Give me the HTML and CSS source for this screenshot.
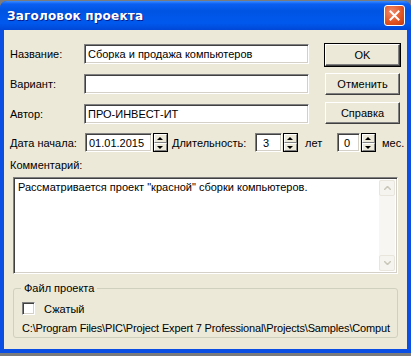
FILE: index.html
```html
<!DOCTYPE html>
<html>
<head>
  <title>Заголовок проекта</title>
  <link rel="stylesheet" href="styles.css">
</head>
<body>
  <div class="window">
    <div class="titlebar">
      <span class="title">Заголовок проекта</span>
      <button class="close" aria-label="Закрыть">
        <svg width="11" height="11" viewBox="0 0 11 11"><path d="M1.5 1.5 L9.5 9.5 M9.5 1.5 L1.5 9.5" stroke="#fff" stroke-width="2" stroke-linecap="square"/></svg>
      </button>
    </div>
    <div class="client">
      <div class="top">
        <div class="fields">
          <div class="row">
            <label class="lbl">Название:</label>
            <div class="edit wide">Сборка и продажа компьютеров</div>
          </div>
          <div class="row">
            <label class="lbl">Вариант:</label>
            <div class="edit wide"></div>
          </div>
          <div class="row">
            <label class="lbl">Автор:</label>
            <div class="edit wide">ПРО-ИНВЕСТ-ИТ</div>
          </div>
        </div>
        <div class="buttons">
          <button class="btn default">OK</button>
          <button class="btn">Отменить</button>
          <button class="btn">Справка</button>
        </div>
      </div>
      <div class="row dates">
        <label class="lbl-date">Дата начала:</label>
        <div class="edit date">01.01.2015</div>
        <div class="spin"><span class="up"></span><span class="down"></span></div>
        <label class="lbl-dur">Длительность:</label>
        <div class="edit num">3</div>
        <div class="spin"><span class="up"></span><span class="down"></span></div>
        <span class="unit">лет</span>
        <div class="edit num small">0</div>
        <div class="spin"><span class="up"></span><span class="down"></span></div>
        <span class="unit last">мес.</span>
      </div>
      <div class="comment-label">Комментарий:</div>
      <div class="memo">
        <div class="memo-text">Рассматривается проект "красной" сборки компьютеров.</div>
        <div class="scroll">
          <div class="sbtn"><svg width="7" height="4" viewBox="0 0 7 4"><path d="M0 4 L3.5 0.5 L7 4" fill="none" stroke="#c9c7ba" stroke-width="1.5"/></svg></div>
          <div class="track"></div>
          <div class="sbtn"><svg width="7" height="4" viewBox="0 0 7 4"><path d="M0 0 L3.5 3.5 L7 0" fill="none" stroke="#c9c7ba" stroke-width="1.5"/></svg></div>
        </div>
      </div>
      <fieldset class="group">
        <legend>Файл проекта</legend>
        <div class="check-row">
          <span class="check"></span>
          <span>Сжатый</span>
        </div>
        <div class="path">C:\Program Files\PIC\Project Expert 7 Professional\Projects\Samples\Comput</div>
      </fieldset>
    </div>
  </div>
</body>
</html>
```

FILE: styles.css
```css
body {
  margin: 0;
  padding: 0;
  background: #7b7b7b;
  font-family: "Liberation Sans", Arial, sans-serif;
  font-size: 11px;
  color: #000;
}
.window {
  width: 411px;
  height: 352px;
  margin-top: 1px;
  box-sizing: border-box;
  background: #0a4ee4;
  border-radius: 7px 7px 0 0;
  padding: 0 4px 4px 4px;
  display: flex;
  flex-direction: column;
}
.titlebar {
  height: 29px;
  display: flex;
  align-items: center;
  justify-content: space-between;
  background: linear-gradient(#3a8cff 0, #0a5ff2 3px, #0054e3 10px, #0059ee 22px, #0047d6 29px);
  margin: 0 -4px;
  padding-left: 7px;
  padding-right: 6px;
  border-radius: 7px 7px 0 0;
}
.title {
  color: #fff;
  font-family: "DejaVu Sans", sans-serif;
  font-weight: bold;
  font-size: 12px;
  letter-spacing: 0.2px;
  text-shadow: 1px 1px #0a1d8c;
  padding-top: 1px;
}
.close {
  width: 21px;
  height: 21px;
  padding: 0;
  border: 1px solid #fff;
  border-radius: 3px;
  background: radial-gradient(circle at 35% 30%, #f08a6a, #e0521f 60%, #c23a12);
  display: flex;
  align-items: center;
  justify-content: center;
}
.client {
  flex: 1;
  background: #ece9d8;
  padding: 14px 7px 0 6px;
}
.top {
  display: flex;
  justify-content: space-between;
}
.fields {
  display: flex;
  flex-direction: column;
  gap: 10px;
}
.row {
  display: flex;
  align-items: center;
}
.row > * {
  flex-shrink: 0;
}
.lbl {
  width: 74px;
}
.edit {
  box-sizing: border-box;
  height: 20px;
  background: #fff;
  border-top: 1px solid #808080;
  border-left: 1px solid #808080;
  border-right: 1px solid #fff;
  border-bottom: 1px solid #fff;
  box-shadow: inset 1px 1px #404040, inset -1px -1px #d4d0c8;
  padding: 2px 3px 0 3px;
  line-height: 15px;
  white-space: nowrap;
  overflow: hidden;
}
.wide {
  width: 225px;
}
.buttons {
  display: flex;
  flex-direction: column;
  gap: 7px;
}
.btn {
  box-sizing: border-box;
  width: 75px;
  height: 22px;
  font-family: "Liberation Sans", Arial, sans-serif;
  font-size: 11px;
  background: #ece9d8;
  border: 1px solid;
  border-color: #fff #404040 #404040 #fff;
  box-shadow: inset -1px -1px #808080;
  padding: 0;
}
.btn.default {
  box-shadow: inset -1px -1px #808080, 0 0 0 1px #000;
}
.dates {
  margin-top: 9px;
}
.lbl-date {
  width: 75px;
}
.date {
  width: 67px;
  height: 19px;
}
.num {
  width: 27px;
  height: 19px;
  text-align: center;
  padding-right: 8px;
}
.num.small {
  width: 23px;
  padding-right: 6px;
}
.spin {
  width: 15px;
  height: 19px;
  margin-left: 1px;
  display: flex;
  flex-direction: column;
  box-sizing: border-box;
  border: 1px solid #000;
  background: #ece9d8;
}
.spin span {
  flex: 1;
  position: relative;
  border-top: 1px solid #fff;
  border-left: 1px solid #fff;
  border-bottom: 1px solid #808080;
  border-right: 1px solid #808080;
}
.spin .up::after,
.spin .down::after {
  content: "";
  position: absolute;
  left: 2px;
  top: 2px;
  border-left: 3px solid transparent;
  border-right: 3px solid transparent;
}
.spin .up::after {
  border-bottom: 3px solid #000;
}
.spin .down::after {
  border-top: 3px solid #000;
}
.lbl-dur {
  margin-left: 4px;
  width: 83px;
}
.unit {
  margin-left: 7px;
  width: 32px;
}
.unit.last {
  margin-left: 6px;
  width: auto;
}
.comment-label {
  margin-top: 7px;
  height: 14px;
}
.memo {
  margin-top: 4px;
  margin-left: 3px;
  width: 385px;
  height: 97px;
  box-sizing: border-box;
  background: #fff;
  border-top: 1px solid #808080;
  border-left: 1px solid #808080;
  border-right: 1px solid #fff;
  border-bottom: 1px solid #fff;
  box-shadow: inset 1px 1px #404040, inset -1px -1px #d4d0c8;
  display: flex;
  padding: 2px;
}
.memo-text {
  flex: 1;
  padding: 1px 2px;
}
.scroll {
  width: 16px;
  display: flex;
  flex-direction: column;
  background: #f7f6f2;
}
.sbtn {
  height: 16px;
  box-sizing: border-box;
  border: 1px solid #e8e6dc;
  border-radius: 2px;
  background: #f5f4ee;
  display: flex;
  align-items: center;
  justify-content: center;
}
.track {
  flex: 1;
}
.group {
  margin: 8px 0 0 3px;
  width: 385px;
  height: 56px;
  box-sizing: border-box;
  border: 1px solid #d0d0bf;
  border-radius: 3px;
  padding: 0 8px;
  min-width: 0;
}
.group legend {
  padding: 0 3px;
  margin-left: -1px;
}
.check-row {
  display: flex;
  align-items: center;
  gap: 9px;
  margin-top: 8px;
}
.check {
  width: 13px;
  height: 13px;
  box-sizing: border-box;
  background: #fff;
  border-top: 1px solid #808080;
  border-left: 1px solid #808080;
  border-right: 1px solid #fff;
  border-bottom: 1px solid #fff;
  box-shadow: inset 1px 1px #404040, inset -1px -1px #d4d0c8;
}
.path {
  margin-top: 7px;
  white-space: nowrap;
  letter-spacing: -0.15px;
}
```
